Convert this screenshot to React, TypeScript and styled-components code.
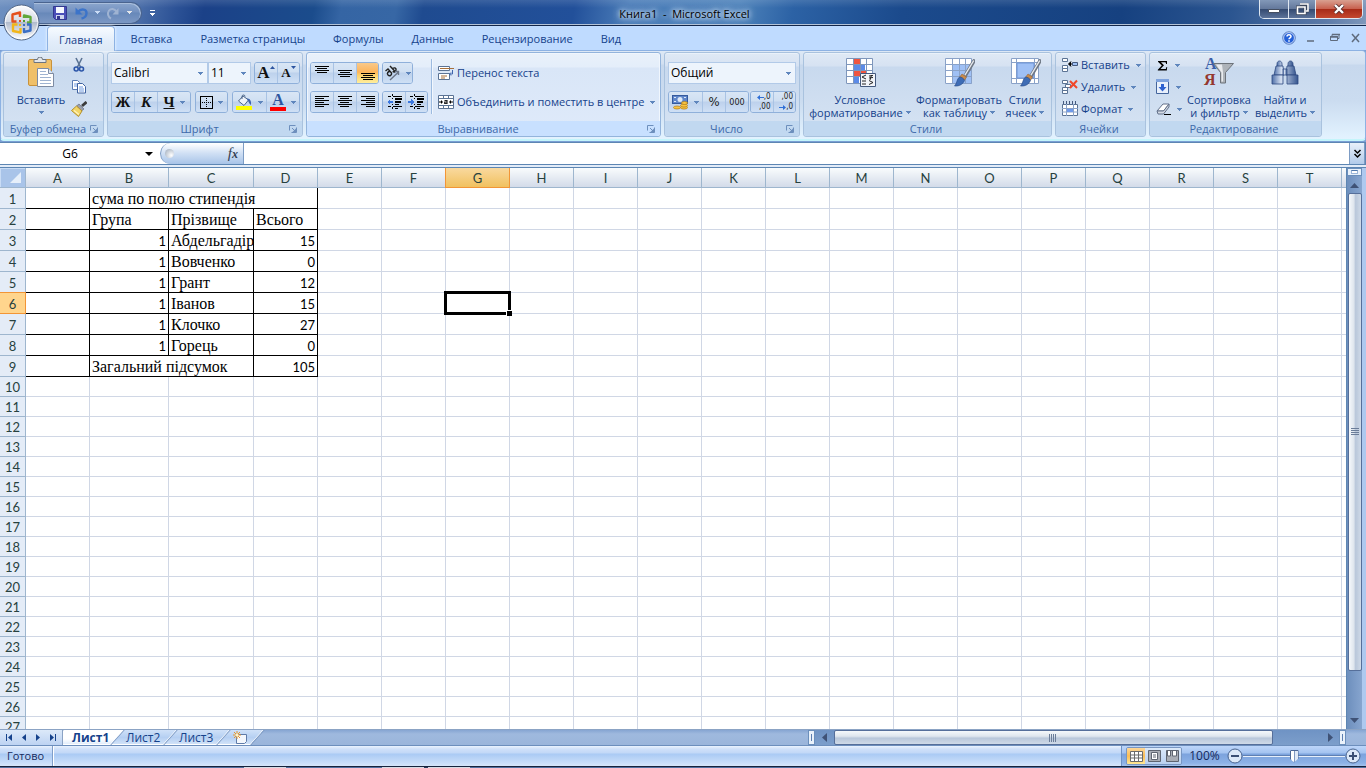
import React from 'react';
import styled, { createGlobalStyle, css } from 'styled-components';

const UI = '"Open Sans", "Noto Sans", sans-serif';
const SERIF = '"Liberation Serif", "Times New Roman", serif';
const CELL = 'Lato, Carlito, "Open Sans", sans-serif';

const Global = createGlobalStyle`
  *, *::before, *::after { box-sizing: border-box; }
  body { margin: 0; background: #7b9fd4; font-family: ${UI}; font-size: 11px; line-height: 16px; color: #15428b; }
  button, input, select { font: inherit; color: inherit; margin: 0; padding: 0; border: 0; background: none; outline: 0; }
  button { cursor: default; white-space: nowrap; }
  svg { display: block; flex: none; }
  h1, h2 { margin: 0; font: inherit; }
`;

const Shell = styled.div`
  display: flex;
  flex-direction: column;
  height: 100vh;
  overflow: hidden;
  position: relative;
`;

/* ---------- title bar ---------- */
const TitleBar = styled.header`
  flex: none;
  height: 26px;
  display: grid;
  grid-template-columns: 1fr auto 1fr;
  border-bottom: 1px solid #12264a;
  box-shadow: inset 0 -1px 0 #b3c3d8;
  background:
    linear-gradient(180deg, rgba(255,255,255,.12) 0, rgba(255,255,255,0) 8px),
    linear-gradient(100deg, #6d8fc0 0, #4d70aa 10%, #2c5296 13%, #1b4188 15%, #1b4c8c 23%, #3565a4 25%, #3767a5 29%, #1f4b90 31%, #22509a 42%, #4a7cb8 46%, #4d82ba 54%, #2c62a5 58%, #1b4a8c 66%, #164180 82%, #2b5590 90%, #5c7aa8 97%, #7f98bb 100%);
`;
const Quick = styled.div`
  display: flex;
  align-items: center;
  padding-left: 34px;
`;
const QuickPill = styled.div`
  height: 22px;
  width: 108px;
  display: flex;
  align-items: center;
  padding-left: 17px;
  border: 1px solid #4a648f;
  border-left: 0;
  border-radius: 0 11px 11px 0;
  box-shadow: inset -1px 1px 0 #a9bedc;
  background: linear-gradient(#8ba6cd, #7391c0 45%, #6788b9 50%, #7c98c4);
`;
const QuickButton = styled.button<{ $w: number }>`
  width: ${p => p.$w}px;
  height: 18px;
  display: flex;
  align-items: center;
  justify-content: center;
`;
const Title = styled.h1`
  align-self: center;
  padding: 2px 6px 0 9px;
  white-space: pre;
  color: #000;
  text-shadow: 0 0 4px #dfe9f7, 0 0 7px #cfdff3, 0 0 9px #cfdff3;
`;
const WindowButtons = styled.div`
  justify-self: end;
  display: flex;
  height: 19px;
  margin-right: 3px;
  border: 1px solid #dfe7f1;
  border-top: 0;
  border-radius: 0 0 5px 5px;
  overflow: hidden;
`;
const WindowButton = styled.button<{ $w: number; $close?: boolean }>`
  width: ${p => p.$w}px;
  display: flex;
  align-items: center;
  justify-content: center;
  border-right: ${p => (p.$close ? 0 : '1px solid #dfe7f1')};
  background: ${p => (p.$close
    ? 'linear-gradient(#d9a090, #c8614f 48%, #a62a17 50%, #c4482f)'
    : 'linear-gradient(#8298b8, #64799c 48%, #33496f 50%, #5b7299)')};
`;
const Orb = styled.button`
  position: absolute;
  left: 3px;
  top: 4px;
  z-index: 3;
`;

/* ---------- ribbon ---------- */
const TabRow = styled.nav`
  flex: none;
  height: 24px;
  display: flex;
  padding-left: 47px;
  background: #bfdbff;
`;
const Tab = styled.button<{ $active?: boolean }>`
  height: 24px;
  padding: 2px 12px 0;
  margin-right: 4px;
  border-radius: 4px 4px 0 0;
  ${p => p.$active && css`
    border: 1px solid #8db2e3;
    border-bottom: 0;
    padding: 1px 11px 0;
    height: 25px;
    background: linear-gradient(#f7fbff, #e2edfa 60%, #dce8f6);
    box-shadow: 0 0 3px #fff;
    z-index: 1;
  `}
`;
const DocButtons = styled.div`
  margin-left: auto;
  display: flex;
  align-items: center;
  gap: 9px;
  padding-right: 5px;
`;
const Ribbon = styled.div`
  flex: none;
  height: 91px;
  display: flex;
  gap: 3px;
  padding: 1px 2px 0;
  border: 1px solid #8db2e3;
  border-bottom: 2px solid #c4f5fb;
  border-radius: 4px;
  background: linear-gradient(#dde8f5 0, #d2e0f1 13px, #c7d8ed 14px, #cbdcf0 50px, #e3f3ff 88px);
`;
const GroupBox = styled.section<{ $w: number; $hot?: boolean }>`
  flex: none;
  width: ${p => p.$w}px;
  height: 85px;
  display: flex;
  flex-direction: column;
  border: 1px solid ${p => (p.$hot ? '#93b4dc' : '#a9c2de')};
  border-radius: 3px;
  box-shadow: ${p => (p.$hot ? 'inset 0 0 0 1px #f0f6fd' : 'inset 0 1px 0 #e9f1fa')};
  background: ${p => (p.$hot
    ? 'linear-gradient(#e9f1fa 0, #e4eefa 14px, #d9e6f7 15px, #dfeafa)'
    : 'linear-gradient(#dfe9f5 0, #d6e2f2 13px, #c8d9ee 14px, #d3e1f2 68px)')};
`;
const GroupBody = styled.div`
  flex: 1;
  display: flex;
`;
const GroupLabel = styled.div<{ $hot?: boolean }>`
  height: 15px;
  display: flex;
  align-items: center;
  padding: 0 5px 0 2px;
  color: #3e6aaa;
  background: ${p => (p.$hot ? '#c8e0ff' : '#c1d8f0')};
  border-radius: 0 0 3px 3px;
  line-height: 14px;
  h2 { flex: 1; text-align: center; white-space: nowrap; }
`;
const BigButton = styled.button<{ $w: number; $ml?: number }>`
  width: ${p => p.$w}px;
  margin-left: ${p => p.$ml || 0}px;
  height: 68px;
  padding-top: 4px;
  display: flex;
  flex-direction: column;
  align-items: center;
  line-height: 13px;
  > svg:first-child { margin-bottom: 4px; }
`;
const LabelLine = styled.span`
  display: flex;
  align-items: center;
  gap: 3px;
  height: 13px;
`;
const SmallColumn = styled.div<{ $pl?: number; $w?: number }>`
  display: flex;
  flex-direction: column;
  padding: 1px 0 0 ${p => p.$pl || 0}px;
  width: ${p => (p.$w ? p.$w + 'px' : 'auto')};
`;
const SmallButton = styled.button`
  height: 22px;
  display: flex;
  align-items: center;
  gap: 3px;
  svg:last-child:not(:first-child) { margin-left: 3px; }
`;
const Rows = styled.div<{ $w: number }>`
  margin: 9px 0 0 3px;
  width: ${p => p.$w}px;
  display: flex;
  flex-direction: column;
  gap: 7px;
`;
const Row = styled.div<{ $start?: boolean }>`
  display: flex;
  justify-content: ${p => (p.$start ? 'flex-start' : 'space-between')};
  gap: ${p => (p.$start ? '3px' : '0')};
  height: 22px;
`;
const Combo = styled.label<{ $w: number }>`
  width: ${p => p.$w}px;
  height: 22px;
  display: flex;
  align-items: center;
  padding: 0 4px 0 2px;
  background: #edf4fc;
  border: 1px solid #b2cae8;
  color: #000;
  font-size: 12px;
  select { flex: 1; min-width: 0; appearance: none; height: 20px; }
`;
const Pair = styled.div`
  display: flex;
`;
const Cluster = styled.div`
  display: flex;
  height: 22px;
  border: 1px solid #8fb0da;
  border-radius: 3px;
  overflow: hidden;
`;
const ToolButton = styled.button<{ $w: number; $on?: boolean }>`
  width: ${p => p.$w}px;
  display: flex;
  align-items: center;
  justify-content: center;
  gap: 5px;
  color: #222;
  background: ${p => (p.$on
    ? 'linear-gradient(#f9c98a, #fdb45a 45%, #fdd06a 60%, #ffee9c)'
    : 'linear-gradient(#d9e6f5 0, #cfdff2 45%, #bdd1ec 50%, #cfe0f5)')};
  & + & { border-left: 1px solid #a9c3e4; }
`;
const Glyph = styled.span<{ $i?: boolean; $u?: boolean; $s?: number }>`
  font-family: ${SERIF};
  font-weight: bold;
  font-size: ${p => p.$s || 15}px;
  font-style: ${p => (p.$i ? 'italic' : 'normal')};
  text-decoration: ${p => (p.$u ? 'underline' : 'none')};
  color: #111;
`;
const FxGlyph = styled.span`
  font: italic 15px/16px ${SERIF};
  color: #333f52;
  sub { font-size: 12px; vertical-align: baseline; font-weight: bold; }
`;
const Divider = styled.div`
  margin: 6px 2px 0 3px;
  width: 2px;
  height: 55px;
  border-left: 1px solid #9dbbe0;
  border-right: 1px solid #f2f7fd;
`;

/* ---------- formula bar ---------- */
const FormulaBar = styled.div`
  flex: none;
  height: 23px;
  margin-top: 1px;
  display: flex;
  border: 1px solid #5d86b3;
  border-left: 0;
  background: #fff;
  color: #000;
  font-size: 12px;
`;
const NameBox = styled.div`
  width: 160px;
  display: flex;
  align-items: center;
  padding-right: 7px;
  input { flex: 1; min-width: 0; text-align: center; padding-right: 5px; }
`;
const FxPart = styled.div`
  width: 84px;
  display: flex;
  align-items: center;
  justify-content: space-between;
  padding: 0 5px 0 4px;
  border: 1px solid #7d9cc4;
  border-width: 0 1px 0 1px;
  border-radius: 11px 0 0 11px;
  background: linear-gradient(#fff, #cfdff4 50%, #a8c4e8);
`;
const Dimple = styled.i`
  width: 9px;
  height: 9px;
  border-radius: 50%;
  background: radial-gradient(circle at 70% 70%, #fff, #9aa7b8);
`;
const Formula = styled.input`
  flex: 1;
  min-width: 0;
  padding: 0 4px !important;
`;
const Expand = styled.button`
  width: 16px;
  display: flex;
  align-items: center;
  justify-content: center;
  border: 1px solid #7d9cc4;
  border-width: 0 1px;
  background: linear-gradient(#e8f0fa, #b2cbea);
`;
const Gap = styled.div`
  flex: none;
  height: 3px;
  background: linear-gradient(#e3ecf8 2px, #5d86b3 2px);
`;

/* ---------- sheet ---------- */
const Work = styled.main`
  flex: 1;
  min-height: 0;
  display: flex;
  overflow: hidden;
`;
const Viewport = styled.div`
  flex: 1;
  min-width: 0;
  overflow: hidden;
  background: #fff;
`;
const Sheet = styled.table`
  table-layout: fixed;
  width: 0;
  border-collapse: separate;
  border-spacing: 0;
  color: #000;
  font-family: ${CELL};
  font-size: 13px;
`;
const ColHead = styled.th<{ $sel?: boolean }>`
  height: 20px;
  padding: 0;
  font-weight: normal;
  color: #27413e;
  line-height: 18px;
  border-right: 1px solid ${p => (p.$sel ? '#f29536' : '#9eb6ce')};
  border-bottom: 1px solid ${p => (p.$sel ? '#f29536' : '#9eb6ce')};
  background: ${p => (p.$sel ? 'linear-gradient(#f9d99f, #f1c15f)' : 'linear-gradient(#f9fcfd, #d3dbe9)')};
  box-shadow: ${p => (p.$sel ? '-1px 0 0 #f29536' : 'none')};
`;
const Corner = styled.th`
  height: 20px;
  padding: 0;
  border: 1px solid #9eb6ce;
  border-width: 0 1px 1px 0;
  background: #a9c4e9;
  box-shadow: inset 1px 1px 0 #c9dcf5;
  svg { margin-left: 9px; }
`;
const RowHead = styled.th<{ $sel?: boolean }>`
  padding: 1px 0 0;
  font-weight: normal;
  color: #27413e;
  line-height: 18px;
  border-right: 1px solid ${p => (p.$sel ? '#f29536' : '#9eb6ce')};
  border-bottom: 1px solid ${p => (p.$sel ? '#f29536' : '#9eb6ce')};
  background: ${p => (p.$sel ? '#ffd58d' : '#e4ecf7')};
  box-shadow: ${p => (p.$sel ? '0 -1px 0 #f29536' : 'none')};
`;
const Cell = styled.td<{ $h: number; $b?: boolean; $r?: boolean; $serif?: boolean; $num?: boolean }>`
  position: relative;
  height: ${p => p.$h}px;
  padding: ${p => (p.$num ? '2px 2px 0 0' : '2px 0 0 2px')};
  white-space: nowrap;
  line-height: 18px;
  text-align: ${p => (p.$num ? 'right' : 'left')};
  border-right: 1px solid ${p => (p.$r ? '#000' : '#d0d7e5')};
  border-bottom: 1px solid ${p => (p.$b ? '#000' : '#d0d7e5')};
  ${p => p.$serif && css`font-family: ${SERIF}; font-size: 16px;`}
`;
const Cursor = styled.div`
  position: absolute;
  inset: -2px;
  z-index: 1;
  border: 3px solid #000;
  &::after {
    content: '';
    position: absolute;
    right: -4px;
    bottom: -4px;
    width: 6px;
    height: 6px;
    background: #000;
    border: solid #fff;
    border-width: 1px 0 0 1px;
  }
`;
const VBar = styled.div`
  flex: none;
  width: 16px;
  display: flex;
  flex-direction: column;
  align-items: center;
  border-left: 1px solid #5d86b3;
  background: linear-gradient(90deg, #6d8fbd, #87a5cf);
`;
const SideEdge = styled.div`
  flex: none;
  width: 4px;
  background: #aec9ef;
`;
const SplitV = styled.div`
  flex: none;
  width: 15px;
  height: 8px;
  padding: 1px 3px;
  background: #e8f1fb;
  border: 1px solid #6b8fbc;
  &::before { content: ''; display: block; height: 4px; border: 1px solid #9bb5d8; border-top-color: #4f78ad; background: #fff; }
`;
const BarButton = styled.button<{ $w: number; $h: number }>`
  flex: none;
  width: ${p => p.$w}px;
  height: ${p => p.$h}px;
  display: flex;
  align-items: center;
  justify-content: center;
`;
const ThumbV = styled.div`
  width: 14px;
  flex: 478 1 0;
  display: flex;
  align-items: center;
  justify-content: center;
  border: 1px solid #566f9a;
  border-radius: 2px;
  background: linear-gradient(90deg, #f5f8fb, #dfe6ee 40%, #b9c7da 55%, #cfdae8);
`;
const Rest = styled.div<{ $g: number }>`
  flex: ${p => p.$g} 1 0;
`;

/* ---------- sheet tabs and horizontal bar ---------- */
const BottomBar = styled.div`
  flex: none;
  height: 17px;
  display: flex;
  padding-right: 20px;
  border-top: 1px solid #8ba3c4;
  background: linear-gradient(#86a5d2, #9fb9de 4px, #9ab5db);
  border-bottom: 1px solid #6d8fbd;
`;
const NavButtons = styled.div`
  display: flex;
  width: 63px;
  padding-left: 2px;
  background: linear-gradient(#dce9f9, #bdd3f2);
  border-right: 1px solid #8ba3c4;
`;
const SheetTab = styled.button<{ $w: number; $z: number; $active?: boolean }>`
  position: relative;
  z-index: ${p => p.$z};
  width: ${p => p.$w}px;
  height: 15px;
  padding-left: ${p => (p.$active ? 9 : 10)}px;
  font-size: 12px;
  line-height: 15px;
  text-align: left;
  font-weight: ${p => (p.$active ? 'bold' : 'normal')};
  &::before {
    content: '';
    position: absolute;
    z-index: -1;
    top: 0;
    bottom: 0;
    left: ${p => (p.$active ? '-6px' : '-8px')};
    right: -2px;
    transform: skewX(-42deg);
    border-right: 1px solid #7c98c0;
    box-shadow: inset -1px -1px 0 #fff;
    background: ${p => (p.$active ? 'linear-gradient(#fff, #fff 60%, #dbe9fb)' : 'linear-gradient(#cfe1f8, #b5cff2 50%, #d5e5f9)')};
  }
  svg { margin-left: 1px; }
`;
const SheetTabs = styled.div`
  flex: 1;
  min-width: 0;
  display: flex;
  overflow: hidden;
  isolation: isolate;
`;
const HBar = styled.div`
  flex: 0 0 40%;
  display: flex;
  align-items: stretch;
  background: linear-gradient(#6f93c4, #7c9ecb);
`;
const SplitH = styled.div`
  flex: none;
  width: 7px;
  padding: 3px 2px;
  background: #eaf2fb;
  border: 1px solid #6b8fbc;
  &::before { content: ''; display: block; width: 1px; height: 7px; background: #5d7fb0; }
`;
const ThumbH = styled.div`
  flex: 438 1 0;
  display: flex;
  align-items: center;
  justify-content: center;
  border: 1px solid #566f9a;
  border-radius: 2px;
  background: linear-gradient(#f5f8fb, #dfe6ee 40%, #b9c7da 55%, #cfdae8);
`;

/* ---------- status bar ---------- */
const StatusBar = styled.footer`
  flex: none;
  height: 20px;
  display: flex;
  color: #15295e;
  background: linear-gradient(#eaf3fe 0, #cfe0f9 3px, #c2d8f7 7px, #aacaf4 8px, #c9def9 17px, #d7e6fa);
`;
const Ready = styled.div`
  width: 53px;
  padding: 2px 0 0 7px;
  border-right: 1px solid #7f9ec9;
  box-shadow: 1px 0 0 #fff;
`;
const StatusRight = styled.div`
  margin-left: auto;
  width: 245px;
  display: flex;
  align-items: center;
  padding: 0 5px 0 4px;
  border-left: 1px solid #6f92c4;
  background: linear-gradient(#bdd6fa 0, #a4c3f0 7px, #7ca3dd 8px, #8cb1e6 17px, #a5c4ee);
`;
const Views = styled.div`
  display: flex;
  height: 18px;
  border: 1px solid #7896c2;
  border-radius: 2px;
  overflow: hidden;
`;
const ViewButton = styled.button<{ $on?: boolean }>`
  width: 18px;
  display: flex;
  align-items: center;
  justify-content: center;
  background: ${p => (p.$on ? 'linear-gradient(#fbd69a, #fbbd55 50%, #ffe996)' : 'linear-gradient(#dbe8f9, #b9d0f0)')};
`;
const Percent = styled.button`
  width: 45px;
  text-align: center;
  font-size: 12px;
`;
const Zoom = styled.input`
  flex: 1;
  min-width: 0;
  height: 16px;
  appearance: none;
  background: linear-gradient(transparent 7px, #5f80b3 7px, #5f80b3 8px, #e6effb 8px, #e6effb 9px, transparent 9px);
  &::-webkit-slider-thumb {
    appearance: none;
    width: 9px;
    height: 13px;
    clip-path: polygon(0 0, 100% 0, 100% 70%, 50% 100%, 0 70%);
    border: 1px solid #4c6796;
    border-radius: 1px 1px 4px 4px;
    background: linear-gradient(90deg, #fff 3px, #7f98c2 3px, #7f98c2 4px, #dfe8f5 4px);
  }
`;
const TaskEdge = styled.div`
  flex: none;
  height: 2px;
  border-top: 1px solid #16233c;
  background: linear-gradient(90deg, #53709f 244px, #d7dce4 244px, #d7dce4 286px, #53709f 286px, #53709f 382px, #d7dce4 382px, #d7dce4 424px, #2a3a5c 424px, #2a3a5c 428px, #d7dce4 428px, #d7dce4 470px, #53709f 470px);
`;

/* ---------- icons ---------- */
const Caret = ({ c = '#5f86bd' }: { c?: string }) => (
  <svg width="5" height="3" viewBox="0 0 5 3" shapeRendering="crispEdges"><path d="M0 0h5v1H4v1H3v1H2V2H1V1H0z" fill={c} /></svg>
);
const Launcher = () => (
  <svg width="8" height="8" viewBox="0 0 8 8"><path d="M.5 5.500V.5h6M3 3l3 3M7.500 2.500v5h-5" fill="none" stroke="#6d8fbd" /><path d="M7 3.500V7H3.500z" fill="#6d8fbd" /></svg>
);
const Lines = ({ y, a }: { y: number; a?: 'l' | 'c' | 'r' }) => {
  const w = a ? [14, 9, 14, 9, 14, 9] : [14, 9, 14, 9];
  return (
    <svg width="16" height="16" viewBox="0 0 16 16" shapeRendering="crispEdges">
      {w.map((n, i) => {
        const len = a ? n : i % 2 ? 10 : 14;
        const x = a === 'l' ? 1 : a === 'r' ? 15 - len : a === 'c' ? (16 - len) / 2 | 0 : (16 - len) / 2;
        return <rect key={i} x={x} y={y + i * 2} width={len} height="1" fill="#000" />;
      })}
    </svg>
  );
};
const Indent = ({ right }: { right?: boolean }) => (
  <svg width="17" height="16" viewBox="0 0 17 16" shapeRendering="crispEdges">
    <path d="M2 2h3v1H2zM7 2h9v1H7zM9 4h7v2H9zM9 7h6v2H9zM9 10h4v1H9zM7 12h9v1H7zM2 12h3v1H2zM6 0h1v2H6zM6 4h1v1H6zM6 10h1v1H6zM6 13h1v2H6zM9 14h3v1H9z" fill="#000" />
    <path d={right ? 'M0 7h3V5l3 3-3 3V9H0z' : 'M7 7H4V5L1 8l3 3V9h3z'} fill="#3c78e0" />
  </svg>
);
const OrbIcon = () => (
  <svg width="37" height="37" viewBox="0 0 37 37">
    <defs>
      <linearGradient id="orb" x1="0" y1="0" x2="0" y2="1"><stop offset="0" stopColor="#fdfdfe" /><stop offset=".48" stopColor="#d3d9e4" /><stop offset=".5" stopColor="#b2bccd" /><stop offset="1" stopColor="#fff" /></linearGradient>
    </defs>
    <circle cx="18.500" cy="18.500" r="17.500" fill="url(#orb)" stroke="#4f6484" />
    <circle cx="18.500" cy="18.500" r="16.300" fill="none" stroke="#fff" strokeOpacity=".8" />
    <g fill="none" strokeWidth="2.400" strokeLinejoin="round">
      <path d="M13.500 17.500H9.500V10.500L17 8.500V13" stroke="#e4501d" />
      <path d="M21 14V11.500L27.500 13V18.500H24" stroke="#5fa83a" />
      <path d="M14.500 20.500H10V27L17.500 28.500V24" stroke="#f2b619" />
      <path d="M21 24V28L27.500 26.500V20.500H24" stroke="#3c6fc4" />
    </g>
    <path d="M16 16h2v2h-2z" fill="#e4501d" /><path d="M20 16h2v2h-2z" fill="#4f9c2e" /><path d="M16 20h2v2h-2z" fill="#f2b619" /><path d="M20 20h2v2h-2z" fill="#3c6fc4" />
  </svg>
);
const SaveIcon = () => (
  <svg width="14" height="14" viewBox="0 0 14 14"><path d="M.5.5h13v13h-11l-2-2z" fill="#4a4fb8" stroke="#33388f" /><path d="M3 1h8v6H3z" fill="#f5f8ff" /><path d="M3 9h8v4H3z" fill="#cfd6ee" /><path d="M4 10h3v3H4z" fill="#33388f" /></svg>
);
const UndoIcon = () => (
  <svg width="14" height="14" viewBox="0 0 14 14">
    <path d="M3 6c3-4 9-3 8.500 1.500C11.300 10 9 12 6.500 12.500" fill="none" stroke="#3c74c9" strokeWidth="2.400" />
    <path d="M.5 1.500v7h7z" fill="#3c74c9" />
  </svg>
);
const RedoIcon = () => (
  <svg width="14" height="14" viewBox="0 0 14 14">
    <path d="M5 12.500C2 11 1 7.500 3 4.500 5 2 8.500 2.500 10.500 5.500" fill="none" stroke="#9fb3d2" strokeWidth="2" />
    <path d="M12.500 2v6.500H6.500z" fill="#9fb3d2" />
  </svg>
);
const PasteIcon = () => (
  <svg width="32" height="32" viewBox="0 0 32 32">
    <rect x="3.500" y="2.500" width="23" height="26" rx="1.500" fill="#f0c069" stroke="#c9923a" />
    <path d="M9 5.500V2.500h3.500a2.500 2.500 0 0 1 5 0H21v3z" fill="#e3e6ea" stroke="#6c7480" />
    <path d="M12.500 11.500h11l5 5v13h-16z" fill="#fff" stroke="#7d8ba3" />
    <path d="M23.500 11.500v5h5" fill="#dbe5f3" stroke="#7d8ba3" />
    <path d="M15 14.500h6M15 17.500h8M15 20.500h11M15 23.500h11M15 26.500h11" stroke="#9fb3d1" />
  </svg>
);
const CutIcon = () => (
  <svg width="16" height="16" viewBox="0 0 16 16"><path d="M5 1l4.500 9M11 1L6.500 10" stroke="#5b7394" strokeWidth="1.600" /><circle cx="5.200" cy="12" r="2" fill="none" stroke="#2c55a8" strokeWidth="1.600" /><circle cx="10.500" cy="12" r="2" fill="none" stroke="#2c55a8" strokeWidth="1.600" /></svg>
);
const CopyIcon = () => (
  <svg width="16" height="16" viewBox="0 0 16 16"><path d="M1.500 1.500h5l2 2v7h-7z" fill="#fff" stroke="#5a7cb5" /><path d="M3 5h4M3 7h4" stroke="#6f9ae0" /><path d="M6.500 4.500h5l3 3v6.500h-8z" fill="#fff" stroke="#3f62a0" /><path d="M8 8h4M8 10h5M8 12h5" stroke="#6f9ae0" /></svg>
);
const BrushIcon = () => (
  <svg width="16" height="16" viewBox="0 0 16 16"><path d="M15.500 1L11 5" stroke="#3c3c3c" strokeWidth="2.800" /><path d="M8 3l5 5-2.500 2L5.500 5z" fill="#9a9eac" stroke="#5b6070" strokeWidth=".6" /><path d="M5.500 5l5.500 5-3.500 5.500L.5 9.500z" fill="#f2d567" stroke="#b38f2b" /><path d="M3 9.500l5 4" stroke="#fff3b8" strokeWidth="1.500" /></svg>
);
const GrowIcon = ({ shrink }: { shrink?: boolean }) => (
  <svg width="5" height="3" viewBox="0 0 5 3"><path d={shrink ? 'M0 0h5L2.500 3z' : 'M0 3h5L2.500 0z'} fill="#2d55a0" /></svg>
);
const SizeGlyph = styled.span`
  display: flex;
  align-items: flex-start;
  svg { margin-top: 1px; }
`;
const BordersIcon = () => (
  <svg width="13" height="13" viewBox="0 0 13 13" shapeRendering="crispEdges"><path d="M.5.5h12v12H.5z" fill="none" stroke="#000" /><path d="M6.500 2v9M2 6.500h9" stroke="#000" strokeDasharray="1 1" /></svg>
);
const FillIcon = () => (
  <svg width="17" height="16" viewBox="0 0 17 16"><path d="M7 2L2.500 7 8 11.500 12.500 6z" fill="#eef3fa" stroke="#4a6488" /><path d="M6 5V2.500a1.500 1.500 0 0 1 3 0" fill="none" stroke="#4a6488" /><path d="M11 4.500c3-.5 4.500 2.500 4 6.500-1.500-1-2-2.500-3-4z" fill="#3f66ad" /><path d="M0 12h16v4H0z" fill="#ffff00" /></svg>
);
const FontColor = styled.span`
  height: 18px;
  width: 16px;
  border-bottom: 4px solid #ff0000;
  font: bold 16px/14px ${SERIF};
  color: #2d55a0;
  text-align: center;
`;
const OrientIcon = () => (
  <svg width="17" height="16" viewBox="0 0 17 16"><g fill="none" stroke="#222" strokeWidth="1.400"><path d="M1.500 6l2.500-2 4 4.500M6.500 6.500c-2.500-.5-4 2-2.500 3.500s4 .5 3.500-2" /><path d="M6 1l5.500 6M8.500 4.500c.5-2.500 4-2 3.500.5s-2.500 2.500-3 1" /></g><path d="M6 15l8.500-8M11 6.500h3.500V10" fill="none" stroke="#6b7688" strokeWidth="1.400" /></svg>
);
const WrapIcon = () => (
  <svg width="16" height="16" viewBox="0 0 16 16"><path d="M.5 1.500h11v4H.5zM.5 8.500h11v6H.5z" fill="#fff" stroke="#5b7394" /><path d="M2 3.500h14M3 11h6M3 13h4" stroke="#a8703a" strokeWidth="1.200" /><path d="M14.500 5v4h-3M13 7.500L11.500 9 13 10.500" fill="none" stroke="#3f66ad" /></svg>
);
const MergeIcon = () => (
  <svg width="16" height="16" viewBox="0 0 16 16"><path d="M.5 1.500h15v13H.5z" fill="#fff" stroke="#5b7394" /><path d="M0 4.500h16M0 11.500h16M5.500 1v3M10.500 1v3M5.500 12v3M10.500 12v3" stroke="#5b7394" /><path d="M1 8h3M12 8h3" stroke="#000" /><path d="M3 6l2 2-2 2zM13 6l-2 2 2 2z" fill="#000" /><path d="M6.500 6.500h2.500v3H6.700V8H9" fill="none" stroke="#222" strokeWidth="1.200" /></svg>
);
const MoneyIcon = () => (
  <svg width="17" height="16" viewBox="0 0 17 16"><rect x=".5" y="1.500" width="15" height="8" fill="#5f86c9" stroke="#345a9e" /><circle cx="8" cy="5.500" r="2.500" fill="#dce8f8" /><path d="M2 3.500h2M12 3.500h2M2 7.500h2" stroke="#dce8f8" /><g fill="#f7c443" stroke="#b37a12" strokeWidth=".7"><ellipse cx="12" cy="13.500" rx="3.500" ry="1.600" /><ellipse cx="12" cy="11.500" rx="3.500" ry="1.600" /><ellipse cx="12.500" cy="9" rx="3" ry="1.500" /><ellipse cx="5" cy="13.500" rx="3.500" ry="1.500" /></g></svg>
);
const Narrow = styled.span<{ $s?: number }>`
  font-family: "DejaVu Sans Condensed", "Liberation Sans", sans-serif;
  font-size: ${p => p.$s || 12}px;
  line-height: 10px;
`;
const Decimals = styled.span`
  display: flex;
  flex-direction: column;
  width: 17px;
`;
const DecLine = styled.span`
  height: 10px;
  display: flex;
  align-items: center;
  justify-content: flex-end;
  font: 8px/10px "DejaVu Sans Condensed", "Liberation Sans", sans-serif;
`;
const Arrow = ({ right }: { right?: boolean }) => (
  <svg width="7" height="5" viewBox="0 0 7 5"><path d={right ? 'M0 2h4V0l3 2.500L4 5V3H0z' : 'M7 2H3V0L0 2.500 3 5V3h4z'} fill="#2f6fd6" /></svg>
);
const gridPath = 'M2.500 1.500h26v25h-26zM2 7.500h27M2 13.500h27M2 19.500h27M9.500 1v26M16.500 1v26M22.500 1v26';
const CondIcon = () => (
  <svg width="32" height="32" viewBox="0 0 32 32"><path d="M2 2h27v25H2z" fill="#fff" /><path d="M9 2h7v6H9zM9 14h13v6H9z" fill="#ef5540" /><path d="M9 8h12v6H9zM9 20h6v7H9z" fill="#5b8be8" /><path d={gridPath} fill="none" stroke="#7e96bb" /><path d="M16.500 16.500h15v13h-15z" fill="#f2f5fa" stroke="#44597d" /><path d="M22 18l-4 2 4 2M18 24h4M18 27h4M25 19l4-.5M25 21l4-.5M26 23l1.500-5M25 23.500l4 2-4 2" fill="none" stroke="#222" /></svg>
);
const PaintBrush = () => (
  <g><path d="M31 4l-9 15" stroke="#6f7885" strokeWidth="3.600" strokeLinecap="round" /><path d="M30.500 4l-8.500 14" stroke="#e8ebef" strokeWidth="1.400" strokeLinecap="round" /><path d="M19 17l4.500 3-1.800 3-5-3z" fill="#c98b4c" stroke="#8f5c2a" strokeWidth=".5" /><path d="M16.500 20c2 0 4.500 1.500 5 3.500-1.500 3.500-5 6-10 5.500 2.500-2 2-7 5-9z" fill="#3e6cb5" stroke="#264a86" strokeWidth=".6" /></g>
);
const TableIcon = () => (
  <svg width="32" height="32" viewBox="0 0 32 32"><path d="M2 2h27v25H2z" fill="#fff" /><path d="M9 8h20v19H9z" fill="#9fc0f5" /><path d={gridPath} fill="none" stroke="#8aa2c8" /><PaintBrush /></svg>
);
const CellStyleIcon = () => (
  <svg width="32" height="32" viewBox="0 0 32 32"><path d="M2.500 1.500h27v25h-27z" fill="#fff" stroke="#8aa2c8" /><path d="M7.500 1v26M25.500 1v26M2 5.500h28M2 21.500h28" stroke="#8aa2c8" /><path d="M8 6h17v15H8z" fill="#9fc0f5" stroke="#6f94d6" /><PaintBrush /></svg>
);
const InsertIcon = () => (
  <svg width="16" height="16" viewBox="0 0 16 16"><path d="M.5 1.500h5v3h-5zM.5 8.500h5v3h-5zM.5 11.500h5v3h-5z" fill="#fff" stroke="#5b7394" /><path d="M10.500 5.500h5v3h-5z" fill="#9fc0f5" stroke="#44597d" /><path d="M10 7H8M9 4.500L6.500 7 9 9.500" stroke="#000" fill="#000" /></svg>
);
const DeleteIcon = () => (
  <svg width="16" height="16" viewBox="0 0 16 16"><path d="M.5 1.500h5v3h-5zM.5 8.500h5v3h-5zM.5 11.500h5v3h-5zM3.500 5.500h5v3h-5z" fill="#fff" stroke="#5b7394" /><path d="M8 2l7 7M15 1.500L8 9" stroke="#f0472a" strokeWidth="2" /></svg>
);
const FormatIcon = () => (
  <svg width="16" height="16" viewBox="0 0 16 16"><path d="M.5 3.500h15v11H.5z" fill="#fff" stroke="#5b7394" /><path d="M0 7.500h16M0 11h16M4.500 3v12M11.500 3v12" stroke="#8aa2c8" /><path d="M5 8h6v3H5z" fill="#6f9aea" /><path d="M1.500 0v3M4.500 0v3M7.500 0v3M10.500 0v3M13.500 0v3" stroke="#44597d" /></svg>
);
const DownIcon = () => (
  <svg width="14" height="16" viewBox="0 0 14 16"><path d="M.5.5h12v14H.5z" fill="#e8f0fc" stroke="#44659c" /><path d="M0 0h13v3H0z" fill="#7fa3dd" /><path d="M5 5h3v3h2.500L6.500 12.500 2.500 8H5z" fill="#2f62d0" /></svg>
);
const EraserIcon = () => (
  <svg width="15" height="14" viewBox="0 0 15 14"><path d="M1 9l6-7h6l-5.500 7z" fill="#fff" stroke="#63718a" /><path d="M1 9h6.500L13 2v3l-5.500 7H2z" fill="#d4dae4" stroke="#63718a" /><path d="M8 12.500h7" stroke="#000" /></svg>
);
const SumIcon = () => (
  <svg width="13" height="11" viewBox="0 0 13 11"><path d="M2 1h9v3h-.8L9.500 2.200H5L8 5.300 4.500 9h5.300L10.500 7h.7L10.800 10.500H1.800V9.700L5.800 5.600 2 1.700z" fill="#000" /></svg>
);
const SortLetters = styled.g`
  font-family: ${SERIF};
  font-weight: bold;
  font-size: 16px;
`;
const SortIcon = () => (
  <svg width="32" height="32" viewBox="0 0 32 32">
    <SortLetters><text x="2" y="12" fill="#3a5fa8">А</text><text x="1" y="28" fill="#94382f">Я</text></SortLetters>
    <path d="M10.500 6.500h20l-8 9v10.500h-5V15.500z" fill="#aeb3b9" stroke="#6d737b" /><path d="M13 7.500h6l1 8v9h-1.500v-9z" fill="#e9ebee" />
  </svg>
);
const FindIcon = () => (
  <svg width="32" height="32" viewBox="0 0 32 32">
    <defs><linearGradient id="bin"><stop offset="0" stopColor="#4f6fa8" /><stop offset=".35" stopColor="#d5e0f2" /><stop offset="1" stopColor="#35558f" /></linearGradient></defs>
    <g fill="url(#bin)" stroke="#2e4a80" strokeWidth=".8">
      <path d="M8 7c0-4 5-4 5 0v3H8zM19 7c0-4 5-4 5 0v3h-5z" /><path d="M5 18l2-9h7l1 9zM17 18l1-9h7l2 9z" /><path d="M3 18h11v9H3zM18 18h11v9H18z" /><path d="M14 12h4v6h-4z" />
    </g>
  </svg>
);
const Mono = ({ d, w = 10, h = 10, c = '#15428b', f }: { d: string; w?: number; h?: number; c?: string; f?: boolean }) => (
  <svg width={w} height={h} viewBox={`0 0 ${w} ${h}`}><path d={d} fill={f ? c : 'none'} stroke={f ? 'none' : c} strokeWidth="1.500" /></svg>
);
const Grip = ({ rows }: { rows?: boolean }) => (
  <svg width="8" height="8" viewBox="0 0 8 8" shapeRendering="crispEdges"><path d={rows ? 'M0 .5h8M0 2.500h8M0 4.500h8M0 6.500h8' : 'M.5 0v8M2.500 0v8M4.500 0v8M6.500 0v8'} stroke="#6b7d99" /></svg>
);
const NewSheetIcon = () => (
  <svg width="15" height="13" viewBox="0 0 15 13"><path d="M3.500 3.500h10v7l-2 2h-8z" fill="#f4f7fc" stroke="#5f7ba8" /><path d="M4 0v8M0 4h8M1 1l6 6M7 1L1 7" stroke="#e8962a" /><circle cx="4" cy="4" r="1.500" fill="#fff3c4" /></svg>
);
const Round = ({ plus }: { plus?: boolean }) => (
  <svg width="16" height="16" viewBox="0 0 16 16"><circle cx="8" cy="8" r="7" fill="#dce8f8" stroke="#47628f" /><path d={plus ? 'M4 8h8M8 4v8' : 'M4 8h8'} stroke="#3b4f74" strokeWidth="2" /></svg>
);

/* ---------- data ---------- */
const columns = 'ABCDEFGHIJKLMNOPQRST'.split('');
const widths: Record<string, number> = { B: 79, C: 85 };
const tabs = ['Вставка', 'Разметка страницы', 'Формулы', 'Данные', 'Рецензирование', 'Вид'];
type Item = { t: string | number; span?: number; num?: boolean };
const table: Item[][] = [
  [{ t: 'сума по полю стипендія', span: 3 }],
  [{ t: 'Група' }, { t: 'Прізвище' }, { t: 'Всього' }],
  ...([['Абдельгадір', 15], ['Вовченко', 0], ['Грант', 12], ['Іванов', 15], ['Клочко', 27], ['Горець', 0]] as [string, number][])
    .map(([n, v]) => [{ t: 1, num: true }, { t: n }, { t: v, num: true }]),
  [{ t: 'Загальний підсумок', span: 2 }, { t: 105, num: true }],
];
const rowCount = 27;

function Group({ w, label, hot, launch, children }: { w: number; label: string; hot?: boolean; launch?: boolean; children: React.ReactNode }) {
  return (
    <GroupBox $w={w} $hot={hot}>
      <GroupBody>{children}</GroupBody>
      <GroupLabel $hot={hot}><h2>{label}</h2>{launch && <button aria-label={label}><Launcher /></button>}</GroupLabel>
    </GroupBox>
  );
}
function Big({ w, ml, icon, lines }: { w: number; ml?: number; icon: React.ReactNode; lines: string[] }) {
  return (
    <BigButton $w={w} $ml={ml}>
      {icon}
      <LabelLine>{lines[0]}</LabelLine>
      <LabelLine>{lines[1]}<Caret /></LabelLine>
    </BigButton>
  );
}

export default function App() {
  return (
    <Shell>
      <Global />
      <TitleBar>
        <Quick>
          <QuickPill>
            <QuickButton $w={18} aria-label="Сохранить"><SaveIcon /></QuickButton>
            <QuickButton $w={25} aria-label="Отменить"><UndoIcon /></QuickButton>
            <QuickButton $w={6} aria-label="Список отмены"><Caret c="#c9dbf5" /></QuickButton>
            <QuickButton $w={26} aria-label="Вернуть"><RedoIcon /></QuickButton>
            <QuickButton $w={6} aria-label="Список возврата"><Caret c="#e3e6ea" /></QuickButton>
          </QuickPill>
          <QuickButton $w={20} aria-label="Настройка панели">
            <svg width="5" height="6" viewBox="0 0 5 6" shapeRendering="crispEdges"><path d="M0 0h5v1H0zM0 3h5v1H4v1H3v1H2V5H1V4H0z" fill="#fff" /></svg>
          </QuickButton>
        </Quick>
        <Title>Книга1  -  Microsoft Excel</Title>
        <WindowButtons>
          <WindowButton $w={29} aria-label="Свернуть"><svg width="12" height="12" viewBox="0 0 12 12"><path d="M.5 6.500h11v3H.5z" fill="#fff" stroke="#444e60" /></svg></WindowButton>
          <WindowButton $w={27} aria-label="Развернуть"><svg width="13" height="12" viewBox="0 0 13 12"><path d="M4 1h8v7h-2M1 4h8v7H1z" fill="none" stroke="#3c475b" strokeWidth="3" /><path d="M4 1h8v7h-2M1.500 4h7.500v6.500H1.500z" fill="none" stroke="#fff" strokeWidth="1.600" /></svg></WindowButton>
          <WindowButton $w={46} $close aria-label="Закрыть"><svg width="12" height="10" viewBox="0 0 12 10"><path d="M2 1l8 8M10 1L2 9" stroke="#5a3030" strokeWidth="4" /><path d="M2 1l8 8M10 1L2 9" stroke="#fff" strokeWidth="2.400" /></svg></WindowButton>
        </WindowButtons>
      </TitleBar>
      <Orb aria-label="Кнопка Office"><OrbIcon /></Orb>

      <TabRow>
        <Tab $active>Главная</Tab>
        {tabs.map(t => <Tab key={t}>{t}</Tab>)}
        <DocButtons>
          <button aria-label="Справка"><svg width="14" height="14" viewBox="0 0 14 14"><circle cx="7" cy="7" r="6.300" fill="#2460d8" stroke="#6f8fc4" /><circle cx="7" cy="7" r="5.400" fill="none" stroke="#fff" strokeWidth=".7" /><path d="M5 5.500c0-2.500 4-2.500 4 0C9 7 7 6.800 7 8.300M7 9.300v1.500" fill="none" stroke="#fff" strokeWidth="1.500" /></svg></button>
          <button aria-label="Свернуть книгу"><Mono d="M2 8h7" w={14} c="#5f6b7d" /></button>
          <button aria-label="Восстановить книгу"><svg width="14" height="10" viewBox="0 0 14 10"><path d="M4 3V1.500h7v4H9.500" fill="none" stroke="#5f6b7d" /><path d="M2.500 3.500h7v4h-7z" fill="none" stroke="#5f6b7d" /><path d="M2 4h8M4 1.500h8" stroke="#5f6b7d" strokeWidth="1.600" /></svg></button>
          <button aria-label="Закрыть книгу"><Mono d="M1 1l7 8M8 1L1 9" c="#5f6b7d" /></button>
        </DocButtons>
      </TabRow>

      <Ribbon>
        <Group w={101} label="Буфер обмена" launch>
          <BigButton $w={60} $ml={7}><PasteIcon /><LabelLine>Вставить</LabelLine><LabelLine><Caret /></LabelLine></BigButton>
          <SmallColumn>
            <SmallButton aria-label="Вырезать"><CutIcon /></SmallButton>
            <SmallButton aria-label="Копировать"><CopyIcon /></SmallButton>
            <SmallButton aria-label="Формат по образцу"><BrushIcon /></SmallButton>
          </SmallColumn>
        </Group>
        <Group w={196} label="Шрифт" launch>
          <Rows $w={189}>
            <Row>
              <Pair>
                <Combo $w={97}><select aria-label="Шрифт"><option>Calibri</option></select><Caret /></Combo>
                <Combo $w={43}><select aria-label="Размер"><option>11</option></select><Caret /></Combo>
              </Pair>
              <Cluster>
                <ToolButton $w={22} aria-label="Увеличить размер"><SizeGlyph><Glyph $s={17}>A</Glyph><GrowIcon /></SizeGlyph></ToolButton>
                <ToolButton $w={22} aria-label="Уменьшить размер"><SizeGlyph><Glyph $s={13}>A</Glyph><GrowIcon shrink /></SizeGlyph></ToolButton>
              </Cluster>
            </Row>
            <Row>
              <Cluster>
                <ToolButton $w={22}><Glyph>Ж</Glyph></ToolButton>
                <ToolButton $w={23}><Glyph $i>К</Glyph></ToolButton>
                <ToolButton $w={33}><Glyph $u>Ч</Glyph><Caret /></ToolButton>
              </Cluster>
              <Cluster><ToolButton $w={31} aria-label="Границы"><BordersIcon /><Caret /></ToolButton></Cluster>
              <Cluster>
                <ToolButton $w={33} aria-label="Цвет заливки"><FillIcon /><Caret /></ToolButton>
                <ToolButton $w={33} aria-label="Цвет текста"><FontColor>A</FontColor><Caret /></ToolButton>
              </Cluster>
            </Row>
          </Rows>
        </Group>
        <Group w={355} label="Выравнивание" hot launch>
          <Rows $w={118}>
            <Row $start>
              <Cluster>
                <ToolButton $w={22} aria-label="По верхнему краю"><Lines y={1} /></ToolButton>
                <ToolButton $w={23} aria-label="По середине"><Lines y={5} /></ToolButton>
                <ToolButton $w={22} $on aria-label="По нижнему краю"><Lines y={8} /></ToolButton>
              </Cluster>
              <Cluster><ToolButton $w={29} aria-label="Ориентация"><OrientIcon /><Caret /></ToolButton></Cluster>
            </Row>
            <Row $start>
              <Cluster>
                <ToolButton $w={22} aria-label="По левому краю"><Lines y={2} a="l" /></ToolButton>
                <ToolButton $w={23} aria-label="По центру"><Lines y={2} a="c" /></ToolButton>
                <ToolButton $w={22} aria-label="По правому краю"><Lines y={2} a="r" /></ToolButton>
              </Cluster>
              <Cluster>
                <ToolButton $w={22} aria-label="Уменьшить отступ"><Indent /></ToolButton>
                <ToolButton $w={22} aria-label="Увеличить отступ"><Indent right /></ToolButton>
              </Cluster>
            </Row>
          </Rows>
          <Divider />
          <Rows $w={218}>
            <SmallButton><WrapIcon />Перенос текста</SmallButton>
            <SmallButton><MergeIcon />Объединить и поместить в центре<Caret /></SmallButton>
          </Rows>
        </Group>
        <Group w={136} label="Число" launch>
          <Rows $w={128}>
            <Row><Combo $w={128}><select aria-label="Числовой формат"><option>Общий</option></select><Caret /></Combo></Row>
            <Row>
              <Cluster>
                <ToolButton $w={33} aria-label="Денежный формат"><MoneyIcon /><Caret /></ToolButton>
                <ToolButton $w={23}><Narrow $s={13}>%</Narrow></ToolButton>
                <ToolButton $w={23}><Narrow $s={9}>000</Narrow></ToolButton>
              </Cluster>
              <Cluster>
                <ToolButton $w={22} aria-label="Увеличить разрядность"><Decimals><DecLine><Arrow />,0</DecLine><DecLine>,00</DecLine></Decimals></ToolButton>
                <ToolButton $w={22} aria-label="Уменьшить разрядность"><Decimals><DecLine>,00</DecLine><DecLine><Arrow right />,0</DecLine></Decimals></ToolButton>
              </Cluster>
            </Row>
          </Rows>
        </Group>
        <Group w={249} label="Стили">
          <Big w={112} icon={<CondIcon />} lines={['Условное', 'форматирование']} />
          <Big w={86} icon={<TableIcon />} lines={['Форматировать', 'как таблицу']} />
          <Big w={46} icon={<CellStyleIcon />} lines={['Стили', 'ячеек']} />
        </Group>
        <Group w={91} label="Ячейки">
          <SmallColumn $pl={6}>
            <SmallButton><InsertIcon />Вставить<Caret /></SmallButton>
            <SmallButton><DeleteIcon />Удалить<Caret /></SmallButton>
            <SmallButton><FormatIcon />Формат<Caret /></SmallButton>
          </SmallColumn>
        </Group>
        <Group w={173} label="Редактирование">
          <SmallColumn $pl={6} $w={35}>
            <SmallButton aria-label="Сумма"><SumIcon /><Caret /></SmallButton>
            <SmallButton aria-label="Заполнить"><DownIcon /><Caret /></SmallButton>
            <SmallButton aria-label="Очистить"><EraserIcon /><Caret /></SmallButton>
          </SmallColumn>
          <Big w={68} icon={<SortIcon />} lines={['Сортировка', 'и фильтр']} />
          <Big w={64} icon={<FindIcon />} lines={['Найти и', 'выделить']} />
        </Group>
      </Ribbon>

      <FormulaBar>
        <NameBox>
          <input aria-label="Имя" defaultValue="G6" />
          <button aria-label="Список имён"><svg width="8" height="4" viewBox="0 0 8 4"><path d="M0 0h8L4 4z" fill="#000" /></svg></button>
        </NameBox>
        <FxPart><Dimple /><button aria-label="Вставить функцию"><FxGlyph>f<sub>x</sub></FxGlyph></button></FxPart>
        <Formula aria-label="Строка формул" />
        <Expand aria-label="Развернуть строку формул"><Mono d="M1.500 1l3 3 3-3M1.500 5l3 3 3-3" w={9} c="#000" /></Expand>
      </FormulaBar>
      <Gap />

      <Work>
        <Viewport>
          <Sheet>
            <colgroup>
              <col width={26} />
              {columns.map(c => <col key={c} width={widths[c] || 64} />)}
              <col width={64} />
            </colgroup>
            <thead>
              <tr>
                <Corner aria-label="Выделить всё"><svg width="13" height="13" viewBox="0 0 13 13"><path d="M12 1v11H1z" fill="#e6effa" /></svg></Corner>
                {columns.map(c => <ColHead key={c} $sel={c === 'G'}>{c}</ColHead>)}
                <ColHead />
              </tr>
            </thead>
            <tbody>
              {Array.from({ length: rowCount }, (_, i) => {
                const items = table[i];
                const h = items ? 21 : 20;
                return (
                  <tr key={i}>
                    <RowHead $sel={i === 5}>{i + 1}</RowHead>
                    {items && <Cell $h={h} $b $r />}
                    {items && items.map((it, k) => (
                      <Cell key={k} $h={h} $b $r colSpan={it.span} $num={it.num} $serif={!it.num}>{it.t}</Cell>
                    ))}
                    {columns.slice(items ? 4 : 0).map(c => (
                      <Cell key={c} $h={h}>{c === 'G' && i === 5 && <Cursor />}</Cell>
                    ))}
                    <Cell $h={h} />
                  </tr>
                );
              })}
            </tbody>
          </Sheet>
        </Viewport>
        <VBar>
          <SplitV />
          <BarButton $w={15} $h={17} aria-label="Вверх"><Mono d="M0 6l4.500-5L9 6z" w={9} h={6} c="#3f5276" f /></BarButton>
          <ThumbV><Grip rows /></ThumbV>
          <Rest $g={41} />
          <BarButton $w={15} $h={17} aria-label="Вниз"><Mono d="M0 0l4.500 5L9 0z" w={9} h={6} c="#3f5276" f /></BarButton>
        </VBar>
        <SideEdge />
      </Work>

      <BottomBar>
        <NavButtons>
          <BarButton $w={15} $h={15} aria-label="Первый лист"><Mono d="M0 0h1v7H0zM6 0v7L2 3.500z" w={7} h={7} f /></BarButton>
          <BarButton $w={14} $h={15} aria-label="Предыдущий лист"><Mono d="M4 0v7L0 3.500z" w={4} h={7} f /></BarButton>
          <BarButton $w={14} $h={15} aria-label="Следующий лист"><Mono d="M0 0v7l4-3.500z" w={4} h={7} f /></BarButton>
          <BarButton $w={16} $h={15} aria-label="Последний лист"><Mono d="M5 0h1v7H5zM0 0v7l4-3.500z" w={7} h={7} f /></BarButton>
        </NavButtons>
        <SheetTabs>
          <SheetTab $w={53} $z={4} $active>Лист1</SheetTab>
          <SheetTab $w={53} $z={3}>Лист2</SheetTab>
          <SheetTab $w={53} $z={2}>Лист3</SheetTab>
          <SheetTab $w={34} $z={1} aria-label="Вставить лист"><NewSheetIcon /></SheetTab>
        </SheetTabs>
        <HBar>
          <SplitH />
          <BarButton $w={19} $h={15} aria-label="Влево"><Mono d="M5 0v9L0 4.500z" w={5} h={9} c="#3f5276" f /></BarButton>
          <ThumbH><Grip /></ThumbH>
          <Rest $g={49} />
          <BarButton $w={17} $h={15} aria-label="Вправо"><Mono d="M0 0v9l5-4.500z" w={5} h={9} c="#3f5276" f /></BarButton>
          <SplitH />
        </HBar>
      </BottomBar>

      <StatusBar>
        <Ready>Готово</Ready>
        <StatusRight>
          <Views>
            <ViewButton $on aria-label="Обычный"><svg width="13" height="11" viewBox="0 0 13 11"><path d="M.5.5h12v10H.5z" fill="#fff" stroke="#6b6b6b" /><path d="M0 4h13M0 7h13M4.500 0v11M8.500 0v11" stroke="#6b6b6b" /></svg></ViewButton>
            <ViewButton aria-label="Разметка страницы"><svg width="13" height="12" viewBox="0 0 13 12"><path d="M.5.5h12v11H.5z" fill="#a9adb5" stroke="#5e6470" /><path d="M3.500 2.500h6v7h-6z" fill="#fff" stroke="#5e6470" /><path d="M5 5h3M5 7h3" stroke="#5e6470" /></svg></ViewButton>
            <ViewButton aria-label="Страничный"><svg width="13" height="12" viewBox="0 0 13 12"><path d="M.5.5h12v11H.5z" fill="#a9adb5" stroke="#5e6470" /><path d="M1.500 1v5h3V1M6.500 1v5h4V1" fill="#fff" stroke="#5e6470" /></svg></ViewButton>
          </Views>
          <Percent>100%</Percent>
          <button aria-label="Уменьшить"><Round /></button>
          <Zoom type="range" min={0} max={100} defaultValue={50} aria-label="Масштаб" />
          <button aria-label="Увеличить"><Round plus /></button>
        </StatusRight>
      </StatusBar>
      <TaskEdge />
    </Shell>
  );
}
